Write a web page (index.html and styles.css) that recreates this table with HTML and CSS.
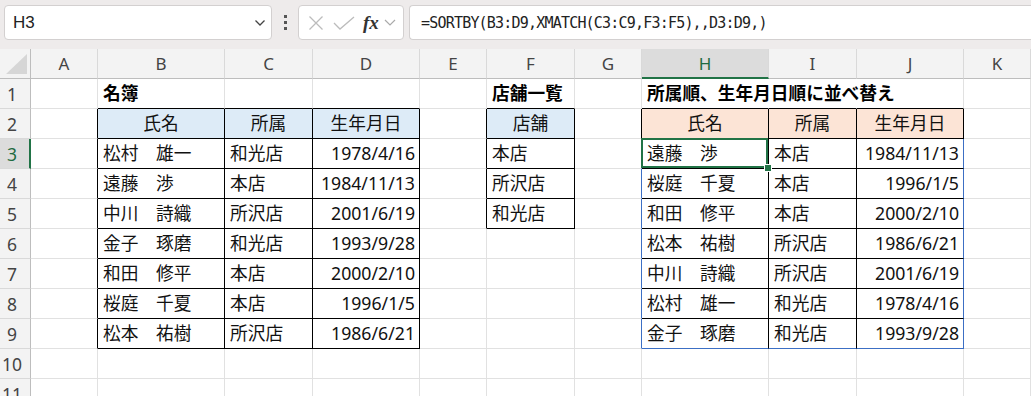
FILE: index.html
```html
<!DOCTYPE html>
<html lang="ja">
<head>
<meta charset="utf-8">
<title>SORTBY</title>
<link rel="stylesheet" href="styles.css">
</head>
<body>
<div class="topbar">
  <div class="namebox">
    <span>H3</span>
    <svg class="chev" width="12" height="8" viewBox="0 0 12 8"><path d="M1.5 1.5 L6 6 L10.5 1.5" fill="none" stroke="#444" stroke-width="1.3"/></svg>
  </div>
  <div class="dots"><i></i><i></i><i></i></div>
  <div class="fxbox">
    <svg width="16" height="16" viewBox="0 0 16 16"><path d="M1.5 1.5 L14.5 14.5 M14.5 1.5 L1.5 14.5" stroke="#bcbcbc" stroke-width="1.3" fill="none"/></svg>
    <svg width="22" height="14" viewBox="0 0 22 14"><path d="M1 7 L7 13 L21 1" stroke="#bcbcbc" stroke-width="1.3" fill="none"/></svg>
    <span class="fx">fx</span>
    <svg width="12" height="7" viewBox="0 0 12 7"><path d="M1 1 L6 6 L11 1" fill="none" stroke="#aaa" stroke-width="1.2"/></svg>
  </div>
  <div class="formula">=SORTBY(B3:D9,XMATCH(C3:C9,F3:F5),,D3:D9,)</div>
</div>

<div class="sheet">
  <!-- header -->
  <div class="corner"><svg width="31" height="30" viewBox="0 0 31 30"><polygon points="27,5 27,25 6,25" fill="#d6d6d6"/></svg></div>
  <div class="ch">A</div><div class="ch">B</div><div class="ch">C</div><div class="ch">D</div><div class="ch">E</div><div class="ch">F</div><div class="ch">G</div><div class="ch sel">H</div><div class="ch">I</div><div class="ch">J</div><div class="ch">K</div>

  <!-- row 1 -->
  <div class="rh">1</div>
  <div class="c"></div>
  <div class="c bb-k bold">名簿</div><div class="c bb-k"></div><div class="c bb-k"></div>
  <div class="c"></div>
  <div class="c bb-k bold">店舗一覧</div>
  <div class="c"></div>
  <div class="c bb-k br-n bold">所属順、生年月日順に並べ替え</div><div class="c bb-k br-n"></div><div class="c bb-k"></div>
  <div class="c"></div>

  <!-- row 2 -->
  <div class="rh">2</div>
  <div class="c br-k"></div>
  <div class="c t hb ctr">氏名</div><div class="c t hb ctr">所属</div><div class="c t hb ctr">生年月日</div>
  <div class="c br-k"></div>
  <div class="c t hb ctr">店舗</div>
  <div class="c br-k"></div>
  <div class="c t ho ctr">氏名</div><div class="c t ho ctr">所属</div><div class="c t ho ctr">生年月日</div>
  <div class="c"></div>

  <!-- row 3 -->
  <div class="rh rsel">3</div>
  <div class="c br-k"></div>
  <div class="c t">松村　雄一</div><div class="c t">和光店</div><div class="c t num">1978/4/16</div>
  <div class="c br-k"></div>
  <div class="c t">本店</div>
  <div class="c br-b"></div>
  <div class="c t active">遠藤　渉</div><div class="c t">本店</div><div class="c t br-b num">1984/11/13</div>
  <div class="c"></div>

  <!-- row 4 -->
  <div class="rh">4</div>
  <div class="c br-k"></div>
  <div class="c t">遠藤　渉</div><div class="c t">本店</div><div class="c t num">1984/11/13</div>
  <div class="c br-k"></div>
  <div class="c t">所沢店</div>
  <div class="c br-b"></div>
  <div class="c t">桜庭　千夏</div><div class="c t">本店</div><div class="c t br-b num">1996/1/5</div>
  <div class="c"></div>

  <!-- row 5 -->
  <div class="rh">5</div>
  <div class="c br-k"></div>
  <div class="c t">中川　詩織</div><div class="c t">所沢店</div><div class="c t num">2001/6/19</div>
  <div class="c br-k"></div>
  <div class="c t">和光店</div>
  <div class="c br-b"></div>
  <div class="c t">和田　修平</div><div class="c t">本店</div><div class="c t br-b num">2000/2/10</div>
  <div class="c"></div>

  <!-- row 6 -->
  <div class="rh">6</div>
  <div class="c br-k"></div>
  <div class="c t">金子　琢磨</div><div class="c t">和光店</div><div class="c t num">1993/9/28</div>
  <div class="c"></div>
  <div class="c"></div>
  <div class="c br-b"></div>
  <div class="c t">松本　祐樹</div><div class="c t">所沢店</div><div class="c t br-b num">1986/6/21</div>
  <div class="c"></div>

  <!-- row 7 -->
  <div class="rh">7</div>
  <div class="c br-k"></div>
  <div class="c t">和田　修平</div><div class="c t">本店</div><div class="c t num">2000/2/10</div>
  <div class="c"></div>
  <div class="c"></div>
  <div class="c br-b"></div>
  <div class="c t">中川　詩織</div><div class="c t">所沢店</div><div class="c t br-b num">2001/6/19</div>
  <div class="c"></div>

  <!-- row 8 -->
  <div class="rh">8</div>
  <div class="c br-k"></div>
  <div class="c t">桜庭　千夏</div><div class="c t">本店</div><div class="c t num">1996/1/5</div>
  <div class="c"></div>
  <div class="c"></div>
  <div class="c br-b"></div>
  <div class="c t">松村　雄一</div><div class="c t">和光店</div><div class="c t br-b num">1978/4/16</div>
  <div class="c"></div>

  <!-- row 9 -->
  <div class="rh">9</div>
  <div class="c br-k"></div>
  <div class="c t">松本　祐樹</div><div class="c t">所沢店</div><div class="c t num">1986/6/21</div>
  <div class="c"></div>
  <div class="c"></div>
  <div class="c br-b"></div>
  <div class="c t bb-b">金子　琢磨</div><div class="c t bb-b">和光店</div><div class="c t br-b bb-b num">1993/9/28</div>
  <div class="c"></div>

  <!-- row 10 -->
  <div class="rh">10</div>
  <div class="c"></div><div class="c"></div><div class="c"></div><div class="c"></div><div class="c"></div><div class="c"></div><div class="c"></div><div class="c"></div><div class="c"></div><div class="c"></div><div class="c"></div>

  <!-- row 11 -->
  <div class="rh">11</div>
  <div class="c"></div><div class="c"></div><div class="c"></div><div class="c"></div><div class="c"></div><div class="c"></div><div class="c"></div><div class="c"></div><div class="c"></div><div class="c"></div><div class="c"></div>
</div>
</body>
</html>
```

FILE: styles.css
```css
html, body {
  margin: 0;
  padding: 0;
}
body {
  width: 1031px;
  height: 396px;
  overflow: hidden;
  background: #ffffff;
  font-family: "Noto Sans", "Noto Sans CJK JP", sans-serif;
  color: #111;
}

/* ---------- formula bar ---------- */
.topbar {
  display: flex;
  align-items: flex-start;
  height: 49px;
  box-sizing: border-box;
  padding: 5px 0 0 4px;
  background: #eeebeb;
  overflow: hidden;
}
.namebox {
  width: 268px;
  height: 35px;
  box-sizing: border-box;
  background: #fff;
  border: 1px solid #d3d0d0;
  border-radius: 4px;
  display: flex;
  align-items: center;
  justify-content: space-between;
  padding: 0 5px 0 8px;
  font-family: "Liberation Sans", Arial, sans-serif;
  font-size: 17px;
  color: #222;
}
.chev { margin-top: 1px; }
.dots {
  width: 26px;
  height: 35px;
  display: flex;
  flex-direction: column;
  align-items: center;
  justify-content: center;
  gap: 3px;
}
.dots i {
  display: block;
  width: 3px;
  height: 3px;
  background: #555;
}
.fxbox {
  width: 106px;
  height: 35px;
  box-sizing: border-box;
  background: #fff;
  border: 1px solid #d3d0d0;
  border-radius: 4px;
  display: flex;
  align-items: center;
  padding-left: 9px;
  gap: 9px;
}
.fxbox .fx {
  font-family: "Liberation Serif", "Times New Roman", serif;
  font-style: italic;
  font-weight: bold;
  font-size: 19px;
  color: #333;
  margin-left: -1px;
  margin-right: -4px;
  line-height: 1;
}
.formula {
  flex: 1;
  margin-left: 5px;
  height: 35px;
  box-sizing: border-box;
  background: #fff;
  border: 1px solid #d3d0d0;
  border-right: none;
  border-radius: 4px 0 0 4px;
  display: flex;
  align-items: center;
  padding-left: 11px;
  font-family: "DejaVu Sans Mono", monospace;
  font-size: 15px;
  letter-spacing: -0.8px;
  color: #222;
  white-space: nowrap;
}

/* ---------- sheet grid ---------- */
.sheet {
  display: grid;
  grid-template-columns: 31px 67px 127px 88px 107px 67px 88px 67px 127px 88px 107px 67px;
  grid-template-rows: 30px;
  grid-auto-rows: 30px;
}
.corner {
  background: #f3f3f3;
  border-right: 1px solid #bdbdbd;
  border-bottom: 1px solid #bdbdbd;
  box-sizing: border-box;
}
.corner svg { display: block; }
.ch {
  box-sizing: border-box;
  background: #f3f3f3;
  border-right: 1px solid #d9d9d9;
  border-bottom: 1px solid #bdbdbd;
  display: flex;
  align-items: center;
  justify-content: center;
  font-size: 17px;
  color: #444;
}
.ch.sel {
  background: #dcdcdc;
  border-bottom: 2px solid #217346;
  color: #1e6b41;
}
.rh {
  box-sizing: border-box;
  background: #f3f3f3;
  border-right: 1px solid #bdbdbd;
  border-bottom: 1px solid #d9d9d9;
  display: flex;
  align-items: center;
  justify-content: center;
  padding-right: 6px;
  font-size: 17.5px;
  color: #444;
}
.rh.rsel {
  background: #dcdcdc;
  border-right: 2px solid #217346;
  color: #1e6b41;
  padding-right: 5px;
}

.c {
  box-sizing: border-box;
  border-right: 1px solid #e1e1e1;
  border-bottom: 1px solid #e1e1e1;
  display: flex;
  align-items: center;
  padding: 0 4px 0 5px;
  font-size: 17.7px;
  line-height: 1.2;
  white-space: nowrap;
  overflow: visible;
  color: #111;
}
.bold { font-weight: bold; color: #000; }
.ctr { justify-content: center; padding: 0; }
.num { justify-content: flex-end; }

.t { border-right: 1px solid #000; border-bottom: 1px solid #000; }
.br-k { border-right: 1px solid #000; }
.bb-k { border-bottom: 1px solid #000; }
.br-n { border-right-color: transparent; }
.t.br-b, .br-b { border-right: 1px solid #3c6fc4; }
.t.bb-b, .bb-b { border-bottom: 1px solid #3c6fc4; }

.hb { background: #ddebf7; }
.ho { background: #fce4d6; }

.active { position: relative; }
.active::after {
  content: "";
  position: absolute;
  left: -1px;
  top: -1px;
  right: 0;
  bottom: 0;
  border: 2px solid #217346;
  pointer-events: none;
}
.active::before {
  content: "";
  position: absolute;
  right: -4px;
  bottom: -4px;
  width: 6px;
  height: 6px;
  background: #217346;
  border: 1px solid #fff;
  z-index: 2;
}
```
